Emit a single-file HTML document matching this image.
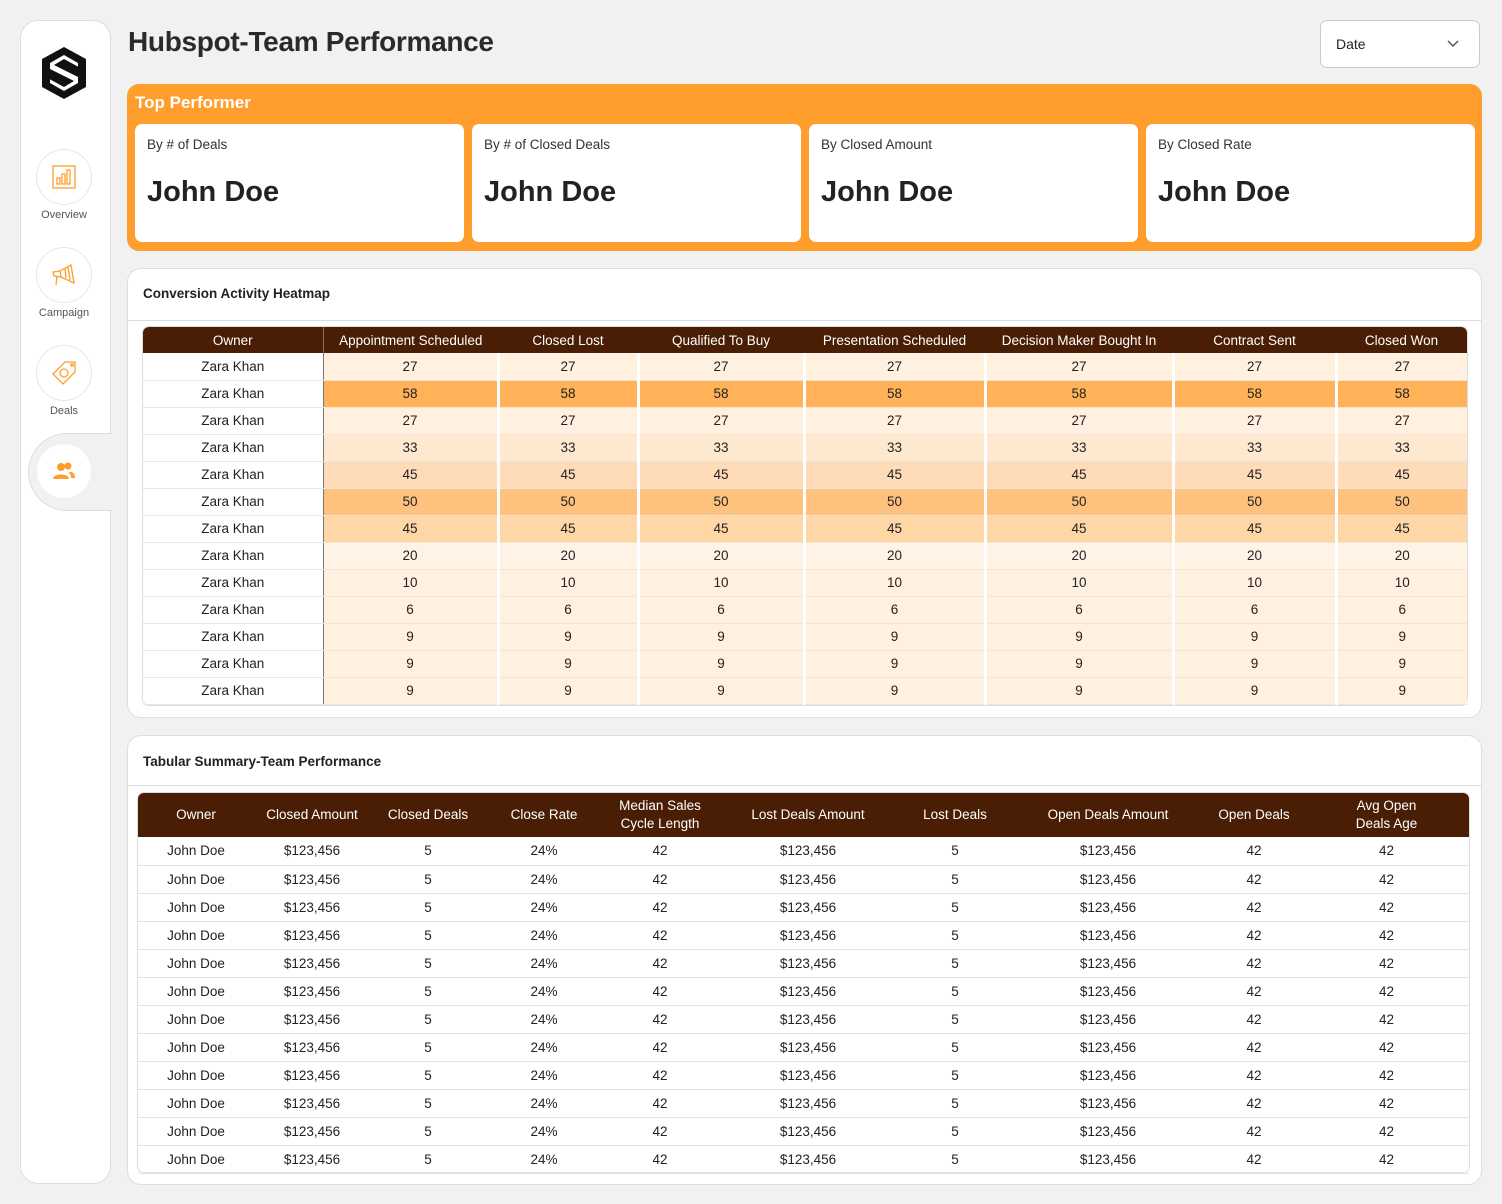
<!DOCTYPE html>
<html><head><meta charset="utf-8"><style>
*{box-sizing:border-box;margin:0;padding:0}
body{width:1502px;height:1204px;background:#f1f1f1;font-family:"Liberation Sans",sans-serif;color:#222;position:relative;overflow:hidden}
.abs{position:absolute}
.side{left:20px;top:20px;width:91px;height:1164px;background:#fff;border:1px solid #ddd;border-radius:18px}
.nav{position:absolute;left:36px;width:56px;height:56px;border-radius:50%;border:1px solid #e6e6e6;background:#fff;display:flex;align-items:center;justify-content:center}
.lbl{position:absolute;left:20px;width:88px;text-align:center;font-size:11px;color:#555}
h1{position:absolute;left:128px;top:26px;font-size:28px;font-weight:bold;color:#2a2a2a;letter-spacing:-0.3px}
.date{left:1320px;top:20px;width:160px;height:48px;background:#fff;border:1px solid #ccc;border-radius:7px;font-size:14px;padding:15px 15px}
.top{left:127px;top:84px;width:1355px;height:167px;background:#ff9e2c;border-radius:12px}
.top .t{position:absolute;left:8px;top:9px;color:#fff;font-weight:bold;font-size:17px}
.card{position:absolute;top:40px;width:329px;height:118px;background:#fff;border-radius:7px}
.card .s{position:absolute;left:12px;top:13px;font-size:13.5px;color:#333}
.card .n{position:absolute;left:12px;top:52px;font-size:29px;font-weight:bold;color:#222}
.panel{left:127px;width:1355px;background:#fff;border:1px solid #ddd;border-radius:14px}
.panel .pt{position:absolute;left:15px;font-size:13.5px;font-weight:bold;color:#222}
.panel .hr{position:absolute;left:0;right:0;height:1px;background:#ddd}
.frame{position:absolute;border:1px solid #ddd;border-radius:7px}
table{border-collapse:collapse;position:absolute;table-layout:fixed;font-size:13.5px}
th{background:#4a1e04;color:#fff;font-weight:normal;text-align:center}
td{text-align:center;color:#222}
.hm td{height:27px;border-bottom:1px solid #e6e6e6}
.hm td+td{border-left:3px solid #fff;border-bottom:1px solid #f3e3d3}
.hm td:nth-child(2){border-left:1px solid #777}
.hm th{height:26px}
.ts th{height:44px;line-height:18px}
.ts td{height:28px;border-bottom:1px solid #e3e3e3}
</style></head><body>
<div class="abs side"></div>
<svg class="abs" style="left:38px;top:45px" width="52" height="56" viewBox="0 0 52 56"><path d="M26 2 L48 14 L48 26 L40 30 L40 18 L26 10 L12 18 L12 24 L36 36 L26 42 L4 30 L4 14 Z" fill="#111"/><path d="M26 54 L4 42 L4 30 L12 26 L12 38 L26 46 L40 38 L40 32 L16 20 L26 14 L48 26 L48 42 Z" fill="#111"/></svg>
<div class="nav" style="top:149px"><svg width="24" height="24" viewBox="0 0 24 24" fill="none" stroke="#ff9e2c" stroke-width="1.3"><rect x="1" y="1" width="22" height="22"/><rect x="5" y="13" width="3" height="6"/><rect x="10" y="9" width="3" height="10"/><rect x="15" y="5" width="3" height="14"/></svg></div>
<div class="lbl" style="top:209px">Overview</div>
<div class="nav" style="top:247px"><svg width="26" height="24" viewBox="0 0 26 24" fill="none" stroke="#ff9e2c" stroke-width="1.3"><path d="M2 9 L9 8 L20 2 L23 20 L10 14 L3 13 Z M9 8 L10 14 M6 13 L5 22 M17 4 L19 17 M14 6 L15 15"/></svg></div>
<div class="lbl" style="top:307px">Campaign</div>
<div class="nav" style="top:345px"><svg width="26" height="26" viewBox="0 0 26 26" fill="none" stroke="#ff9e2c" stroke-width="1.3"><path d="M14 2 L24 2 L24 12 L12 24 L2 14 Z"/><circle cx="21" cy="5" r="1.2"/><circle cx="13" cy="13" r="4"/></svg></div>
<div class="lbl" style="top:405px">Deals</div>
<div class="abs" style="left:28px;top:433px;width:84px;height:78px;background:#f1f1f1;border-radius:40px 0 0 40px;border:1px solid #ddd;border-right:none"></div>
<div class="nav" style="top:443px;border-color:#eee"><svg width="24" height="18" viewBox="0 0 24 18" fill="#ff9e2c"><circle cx="9" cy="5" r="4"/><path d="M1 17 C1 11 17 11 17 17 Z"/><circle cx="16" cy="4" r="3.5"/><path d="M18 10 C22 10 23 13 23 16 L19 16 C19 13 18 11 16 10 Z"/></svg></div>
<h1>Hubspot-Team Performance</h1>
<div class="abs date">Date<svg style="position:absolute;right:20px;top:19px" width="12" height="8" viewBox="0 0 12 8"><path d="M1 1 L6 6 L11 1" fill="none" stroke="#555" stroke-width="1.5"/></svg></div>
<div class="abs top"><div class="t">Top Performer</div>
<div class="card" style="left:8px"><div class="s">By # of Deals</div><div class="n">John Doe</div></div>
<div class="card" style="left:345px"><div class="s">By # of Closed Deals</div><div class="n">John Doe</div></div>
<div class="card" style="left:682px"><div class="s">By Closed Amount</div><div class="n">John Doe</div></div>
<div class="card" style="left:1019px"><div class="s">By Closed Rate</div><div class="n">John Doe</div></div>
</div>
<div class="abs panel" style="top:268px;height:450px"><div class="pt" style="top:17px">Conversion Activity Heatmap</div><div class="hr" style="top:51px"></div></div>
<div class="frame" style="left:142px;top:326px;width:1326px;height:380px"></div>
<table class="hm" style="left:143px;top:327px;width:1324px">
<colgroup><col style="width:180px"><col style="width:175px"><col style="width:140px"><col style="width:166px"><col style="width:181px"><col style="width:188px"><col style="width:163px"><col style="width:131px"></colgroup>
<tr><th style="border-radius:6px 0 0 0;border-right:1px solid #8a6a55">Owner</th><th>Appointment Scheduled</th><th>Closed Lost</th><th>Qualified To Buy</th><th>Presentation Scheduled</th><th>Decision Maker Bought In</th><th>Contract Sent</th><th style="border-radius:0 6px 0 0">Closed Won</th></tr>
<tbody id="hb"></tbody></table>
<div class="abs panel" style="top:735px;height:450px"><div class="pt" style="top:18px">Tabular Summary-Team Performance</div><div class="hr" style="top:49px"></div></div>
<div class="frame" style="left:137px;top:792px;width:1333px;height:381px"></div>
<table class="ts" style="left:138px;top:793px;width:1331px">
<colgroup><col style="width:116px"><col style="width:116px"><col style="width:116px"><col style="width:116px"><col style="width:116px"><col style="width:180px"><col style="width:114px"><col style="width:192px"><col style="width:100px"><col style="width:165px"></colgroup>
<tr><th style="border-radius:6px 0 0 0">Owner</th><th>Closed Amount</th><th>Closed Deals</th><th>Close Rate</th><th>Median Sales<br>Cycle Length</th><th>Lost Deals Amount</th><th>Lost Deals</th><th>Open Deals Amount</th><th>Open Deals</th><th style="border-radius:0 6px 0 0">Avg Open<br>Deals Age</th></tr>
<tbody id="tb"></tbody></table>
<script>
var v=[27,58,27,33,45,50,45,20,10,6,9,9,9];
var c={27:"#fff0e0",58:"#ffb257",33:"#ffe8d0",45:"#fedcb8",50:"#ffc27e",20:"#fff3e6",10:"#fff0e0",6:"#fff0e0",9:"#fff0e0"};
var h="";v.forEach(function(x,i){var col=(i==6?"#ffd6a6":c[x]);h+="<tr><td>Zara Khan</td>";for(var j=0;j<7;j++)h+='<td style="background:'+col+'">'+x+"</td>";h+="</tr>"});
document.getElementById("hb").innerHTML=h;
var t="";for(var i=0;i<12;i++)t+="<tr><td>John Doe</td><td>$123,456</td><td>5</td><td>24%</td><td>42</td><td>$123,456</td><td>5</td><td>$123,456</td><td>42</td><td>42</td></tr>";
document.getElementById("tb").innerHTML=t;
</script>
</body></html>
